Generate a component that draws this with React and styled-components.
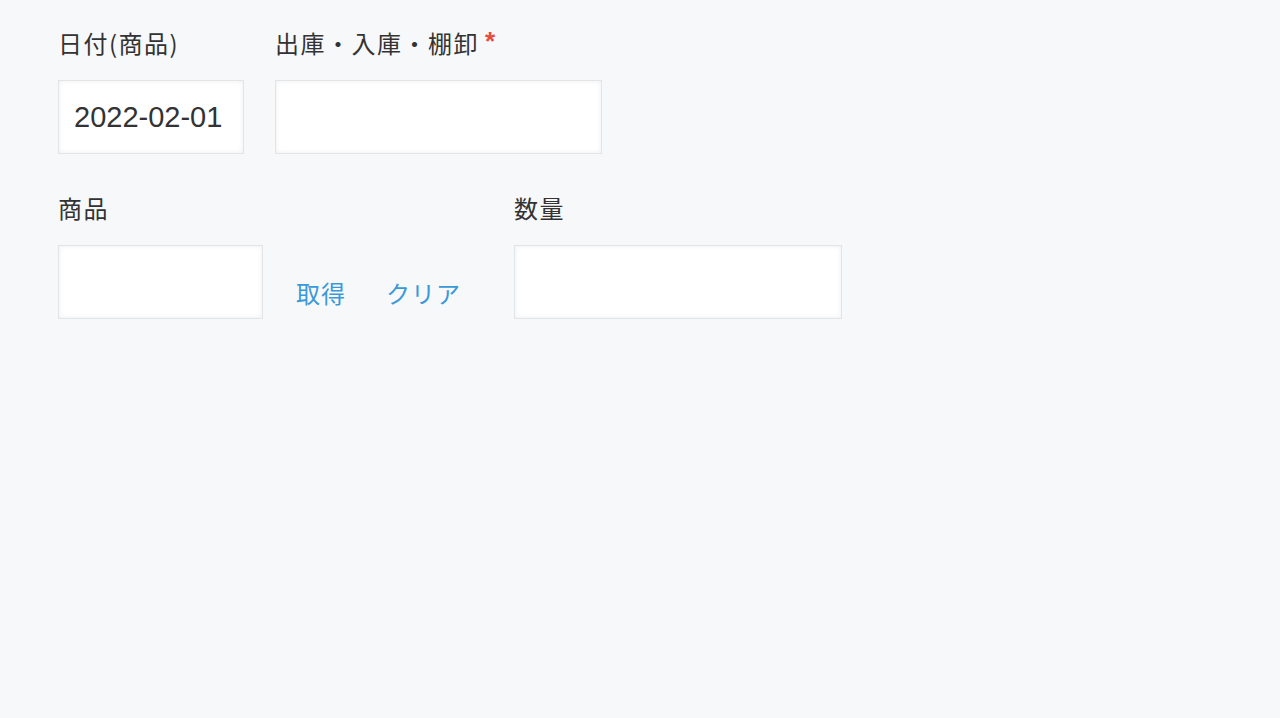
import React from "react";
import styled, { createGlobalStyle } from "styled-components";

const GlobalStyle = createGlobalStyle`
  html, body {
    margin: 0;
    padding: 0;
    background: #f7f8fa;
  }
  body {
    font-family: "Noto Sans CJK JP", "Noto Sans", sans-serif;
    color: #333;
  }
`;

const Form = styled.div`
  min-height: 718px;
  box-sizing: border-box;
  padding: 26px 0 0 58px;
  display: flex;
  flex-direction: column;
  gap: 37px;
`;

const Row = styled.div`
  display: flex;
  align-items: flex-end;
`;

const Field = styled.div`
  display: flex;
  flex-direction: column;
  margin-right: ${(p) => p.$gap || 0}px;
`;

const Label = styled.div`
  font-size: 24px;
  line-height: 34px;
  height: 34px;
  margin-bottom: 20px;
  color: #333;
  letter-spacing: 1.5px;
  white-space: nowrap;
  display: flex;
  align-items: flex-start;
`;

const Required = styled.span`
  color: #e74c3c;
  font-family: "Liberation Sans", Arial, sans-serif;
  font-weight: bold;
  font-size: 26px;
  line-height: 26px;
  margin-left: 6px;
  margin-top: 2px;
`;

const Input = styled.input`
  box-sizing: border-box;
  width: ${(p) => p.$w}px;
  height: 74px;
  border: 1px solid #e2e5e7;
  background: #fff;
  box-shadow: inset 0 0 5px rgba(0, 0, 0, 0.07);
  padding: 0 15px;
  font-family: "Liberation Sans", Arial, sans-serif;
  font-size: 29px;
  color: #333;
  outline: none;
`;

const Actions = styled.div`
  display: flex;
  align-items: center;
  height: 74px;
  padding-top: 22px;
  box-sizing: border-box;
  margin-right: 53px;
`;

const ActionLink = styled.a`
  color: #3a9ad9;
  font-size: 24px;
  line-height: 30px;
  letter-spacing: 1px;
  text-decoration: none;
  cursor: pointer;
  margin-right: ${(p) => p.$gap || 0}px;
`;

export default function App() {
  return (
    <>
      <GlobalStyle />
      <Form>
        <Row>
          <Field $gap={31}>
            <Label>日付(商品)</Label>
            <Input $w={186} defaultValue="2022-02-01" />
          </Field>
          <Field>
            <Label>
              出庫・入庫・棚卸<Required>*</Required>
            </Label>
            <Input $w={327} />
          </Field>
        </Row>
        <Row>
          <Field $gap={33}>
            <Label>商品</Label>
            <Input $w={205} />
          </Field>
          <Actions>
            <ActionLink $gap={40}>取得</ActionLink>
            <ActionLink>クリア</ActionLink>
          </Actions>
          <Field>
            <Label>数量</Label>
            <Input $w={328} />
          </Field>
        </Row>
      </Form>
    </>
  );
}
